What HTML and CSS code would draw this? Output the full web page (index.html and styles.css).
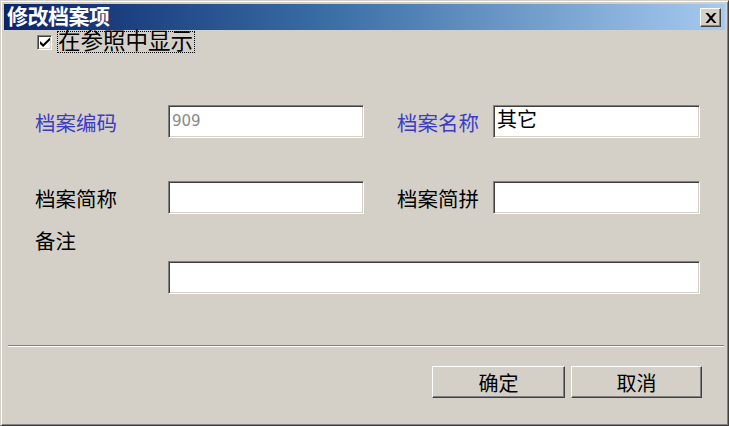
FILE: index.html
```html
<!DOCTYPE html>
<html lang="zh-CN">
<head>
<meta charset="utf-8">
<title>修改档案项</title>
<link rel="stylesheet" href="styles.css">
</head>
<body>
<div class="window">
  <div class="titlebar">
    <span class="title">修改档案项</span>
    <span class="close-btn">
      <svg width="12" height="10" viewBox="0 0 12 10"><path d="M0.5 0h2.6L6 3.2 8.9 0h2.6L7.3 5l4.2 5H8.9L6 6.8 3.1 10H0.5l4.2-5z" fill="#000"/></svg>
    </span>
  </div>
  <div class="body">
    <div class="check-row">
      <span class="checkbox">
        <svg width="11" height="10" viewBox="0 0 11 10"><path d="M0 4l3.5 3.3L11 0v3.2L3.5 10.5 0 7.2z" fill="#000"/></svg>
      </span>
      <span class="check-label">在参照中显示</span>
    </div>
    <div class="form">
      <label class="lbl lbl-blue">档案编码</label>
      <div class="field field-a"><span class="val val-gray">909</span></div>
      <label class="lbl lbl-blue lbl-b">档案名称</label>
      <div class="field field-b"><span class="val">其它</span></div>
      <label class="lbl">档案简称</label>
      <div class="field field-a"></div>
      <label class="lbl lbl-b">档案简拼</label>
      <div class="field field-b"></div>
    </div>
    <div class="memo-row">
      <label class="lbl memo-lbl">备注</label>
      <div class="field field-memo"></div>
    </div>
    <div class="separator"></div>
    <div class="buttons">
      <span class="btn btn-ok">确定</span>
      <span class="btn btn-cancel">取消</span>
    </div>
  </div>
</div>
</body>
</html>
```
FILE: styles.css
```css
html, body {
  margin: 0;
  padding: 0;
  background: #d4d0c8;
}
body {
  width: 729px;
  height: 426px;
  overflow: hidden;
  font-family: "Noto Sans CJK SC", "Noto Sans", sans-serif;
}
.window {
  box-sizing: border-box;
  width: 729px;
  height: 426px;
  background: #d4d0c8;
  border-top: 1px solid #d4d0c8;
  border-left: 1px solid #d4d0c8;
  border-right: 1px solid #404040;
  border-bottom: 1px solid #404040;
  box-shadow: inset 1px 1px #ffffff, inset -1px -1px #808080;
  padding: 3px;
  display: flex;
  flex-direction: column;
}
.titlebar {
  height: 26px;
  background: linear-gradient(to right, #0a246a 0%, #3a6ea5 45%, #a6caf0 100%);
  display: flex;
  align-items: center;
  justify-content: space-between;
  padding: 0 4px 0 3px;
}
.title {
  color: #fff;
  font-family: "Liberation Sans", "Noto Sans CJK SC", sans-serif;
  font-weight: bold;
  font-size: 21px;
  line-height: 22px;
  letter-spacing: -0.5px;
}
.close-btn {
  box-sizing: border-box;
  width: 21px;
  height: 19px;
  background: #d4d0c8;
  border-top: 1px solid #fff;
  border-left: 1px solid #fff;
  border-right: 1px solid #404040;
  border-bottom: 1px solid #404040;
  box-shadow: inset -1px -1px #808080;
  display: flex;
  align-items: center;
  justify-content: center;
  margin-top: 1px;
}
.body {
  flex: 1;
  display: flex;
  flex-direction: column;
}
.check-row {
  display: flex;
  align-items: center;
  margin-left: 33px;
  height: 20px;
  margin-top: 2px;
}
.checkbox {
  box-sizing: border-box;
  width: 15px;
  height: 15px;
  background: #fff;
  border-top: 1px solid #808080;
  border-left: 1px solid #808080;
  border-right: 1px solid #fff;
  border-bottom: 1px solid #fff;
  box-shadow: inset 1px 1px #404040, inset -1px -1px #d4d0c8;
  display: flex;
  align-items: center;
  justify-content: center;
}
.checkbox svg {
  width: 10px;
  height: 10px;
}
.check-label {
  margin-left: 5px;
  font-family: "Liberation Sans", "Noto Sans CJK SC", sans-serif;
  font-size: 22.5px;
  line-height: 20px;
  padding: 0 1px 0 0;
  border: 1px dotted #000;
  color: #000;
}
.form {
  display: grid;
  grid-template-columns: 133px 196px 33px 96px 207px;
  grid-auto-rows: 33px;
  row-gap: 43px;
  margin-top: 53px;
  margin-left: 31px;
  align-items: center;
}
.lbl {
  font-size: 20.5px;
  color: #000;
  line-height: 22px;
  white-space: nowrap;
}
.lbl-blue {
  color: #3c3cc8;
}
.lbl-b {
  grid-column: 4;
}
.field {
  box-sizing: border-box;
  height: 33px;
  background: #fff;
  border-top: 1px solid #808080;
  border-left: 1px solid #808080;
  border-right: 1px solid #fff;
  border-bottom: 1px solid #fff;
  box-shadow: inset 1px 1px #404040, inset -1px -1px #d4d0c8;
  display: flex;
  align-items: center;
  padding-left: 3px;
}
.field-a {
  grid-column: 2;
}
.field-b {
  grid-column: 5;
}
.val {
  font-size: 20px;
  color: #000;
  line-height: 22px;
  margin-top: -6px;
}
.val-gray {
  color: #8a8a8a;
  font-family: "DejaVu Sans", sans-serif;
  font-size: 15px;
  margin-top: -2px;
}
.memo-row {
  display: flex;
  margin-left: 31px;
  margin-top: 15px;
}
.memo-lbl {
  width: 133px;
}
.field-memo {
  width: 532px;
  margin-top: 32px;
}
.separator {
  margin: 51px 1px 0 4px;
  height: 1px;
  background: #808080;
  border-bottom: 1px solid #fff;
}
.buttons {
  display: flex;
  justify-content: flex-end;
  gap: 6px;
  margin-top: 19px;
  padding-right: 23px;
}
.btn {
  box-sizing: border-box;
  height: 32px;
  background: #d4d0c8;
  border-top: 1px solid #fff;
  border-left: 1px solid #fff;
  border-right: 1px solid #404040;
  border-bottom: 1px solid #404040;
  box-shadow: inset -1px -1px #808080;
  font-size: 20px;
  color: #000;
  display: flex;
  align-items: center;
  justify-content: center;
}
.btn-ok {
  width: 133px;
}
.btn-cancel {
  width: 131px;
}
```
